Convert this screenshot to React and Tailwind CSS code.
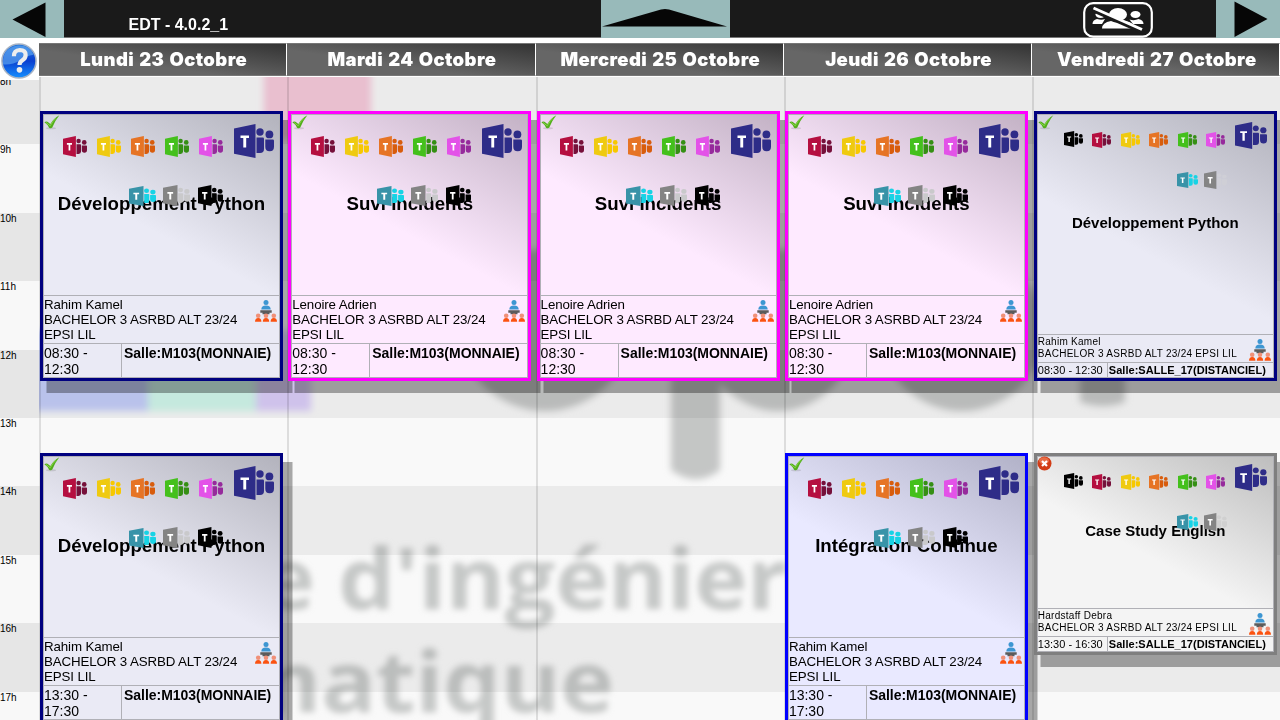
import React from "react";

const NAVY = { border: "border-[#00007f]", top: "#b3b3bd", body: "#eaeaf5" };
const PINK = { border: "border-[#ff00ff]", top: "#c3b2c5", body: "#feeaff" };
const BLUE = { border: "border-[#0000ff]", top: "#b2b2c8", body: "#e9e9ff" };
const GREY = { border: "border-[#7f7f7f]", top: "#bebebe", body: "#f4f4f4" };

const ICON_COLORS = [
  ["#b50f40", "#76103a"],
  ["#efca10", "#f7c800"],
  ["#e67425", "#d85c0c"],
  ["#44c01c", "#358f14"],
  ["#e352e8", "#962a9c"],
];

function TeamsIcon({ a, b, className }) {
  return (
    <svg viewBox="0 0 40 34" preserveAspectRatio="none" className={className}>
      <g fill={b}>
        <circle cx="26" cy="8" r="3.7" />
        <circle cx="35.4" cy="10.4" r="3.9" />
        <path d="M22.5 13.5h6.3q1.2 0 1.2 1.2v10.300q0 4-4 4h-3.500z" />
        <path d="M31.300 15.500h7.500q1.200 0 1.200 1.200v6q0 4.500-4.300 4.500-4.400 0-4.400-4.500z" />
      </g>
      <path d="M0 4.500L21.500 0v34L0 29.700z" fill={a} />
      <path d="M6.500 11.500h8.500v2.500h-2.800v9.500h-2.900v-9.500H6.500z" fill="#fff" />
    </svg>
  );
}

function CheckIcon() {
  return (
    <svg viewBox="0 0 16 15" className="absolute left-[1px] top-[1px] h-[15px] w-[16px]">
      <ellipse cx="7" cy="13.300" rx="5" ry="1" fill="#777" opacity=".25" />
      <path d="M.4 7.300Q2 6 3.500 6.800l2.900 2.200Q9.500 3.500 15.300.3 10.900 5.800 8.300 12.600q-1.500 1.200-3.200.1Q3.600 9.500.4 7.300z" fill="#52ae1b" />
      <path d="M2 7.500l4.200 3.300Q9 5.500 12 3.300" fill="none" stroke="#8dd84e" strokeWidth=".9" />
    </svg>
  );
}

function CrossIcon() {
  return (
    <svg viewBox="0 0 15 15" className="absolute left-0 top-0 h-[15px] w-[15px]">
      <circle cx="7.500" cy="7.500" r="7" fill="#d23c15" />
      <ellipse cx="7" cy="4.700" rx="5" ry="3.500" fill="#f0815c" opacity=".7" />
      <path d="M5 5l5 5M10 5l-5 5" stroke="#fff" strokeWidth="2.200" />
    </svg>
  );
}

function GroupIcon({ className }) {
  return (
    <svg viewBox="0 0 22 22" className={`absolute h-[22px] w-[22px] ${className}`}>
      <circle cx="11" cy="2.600" r="2.500" fill="#3d96d2" />
      <path d="M6.300 9.500q0-4.100 4.700-4.100t4.700 4.100z" fill="#3d96d2" />
      <path d="M5.300 10.300h11.400v2.400h-2.200v1.600h-7v-1.600H5.300z" fill="#5b5b5b" />
      {[3.2, 11, 18.800].map((x) => (
        <g key={x}>
          <circle cx={x} cy="15.700" r="2.300" fill="#f09078" />
          <path d={`M${x - 3.200} 21.700q0-3.800 3.200-3.800t3.200 3.800z`} fill="#fb5210" />
        </g>
      ))}
    </svg>
  );
}

function WideIcons() {
  return (
    <div className="absolute left-[20px] top-[10px]">
      <div className="flex items-center gap-[10px]">
        {ICON_COLORS.map(([a, b]) => (
          <TeamsIcon key={a} a={a} b={b} className="mt-[10px] h-[21px] w-[24px]" />
        ))}
        <TeamsIcon a="#2e2c88" b="#2e2c88" className="ml-[1px] h-[34px] w-[40px]" />
      </div>
      <div className="ml-[66px] mt-[27px] flex items-center">
        <TeamsIcon a="#3893a8" b="#17d3e5" className="h-[20px] w-[27px]" />
        <TeamsIcon a="#848484" b="#c9c9cb" className="ml-[7px] h-[21px] w-[27px]" />
        <TeamsIcon a="#000" b="#000" className="-mt-px ml-[8px] h-[21px] w-[25px]" />
      </div>
    </div>
  );
}

function CompactIcons({ faint }) {
  return (
    <div className="absolute left-[27px] top-[8px]">
      <div className="flex items-center gap-[9.500px]">
        <TeamsIcon a="#000" b="#000" className="mt-[6px] h-[16px] w-[19px]" />
        {ICON_COLORS.map(([a, b]) => (
          <TeamsIcon key={a} a={a} b={b} className="mt-[8px] h-[16px] w-[19px]" />
        ))}
        <TeamsIcon a="#2e2c88" b="#2e2c88" className="h-[27px] w-[32px]" />
      </div>
      <div className="ml-[113px] mt-[22px] flex items-center">
        <TeamsIcon a="#3893a8" b="#17d3e5" className="h-[16px] w-[21px]" />
        <TeamsIcon a="#848484" b={faint} className="ml-[6px] h-[18px] w-[23px]" />
      </div>
    </div>
  );
}

function Course({ tone, title, teacher, start, end, room, compact, cancelled, className }) {
  const line = "border-[#b0b0b6]";
  return (
    <article
      className={`relative flex w-[243px] shrink-0 flex-col border-[3px] text-black shadow-[8px_10.5px_0_1.5px_rgba(0,0,0,0.33)] ${compact ? "-ml-[0.4px]" : "-ml-px"} ${tone.border} ${className}`}
      style={{ backgroundColor: tone.body }}
    >
      <div
        className={`flex min-h-0 flex-1 items-center justify-center border-x border-t pb-[2px] ${line}`}
        style={{ backgroundImage: `linear-gradient(28deg, ${tone.body} 40%, ${tone.top})` }}
      >
        <h2 className={compact ? "text-[15px] font-bold" : "text-[18.670px] font-bold"}>{title}</h2>
      </div>
      {compact ? (
        <>
          <div className={`h-[28px] border-x border-t pt-px text-[10px] leading-[12px] tracking-[0.270px] whitespace-nowrap ${line}`}>
            <p>{teacher}</p>
            <p>BACHELOR 3 ASRBD ALT 23/24 EPSI LIL</p>
          </div>
          <div className={`flex h-[16px] border text-[11px] leading-[15px] whitespace-nowrap ${line}`}>
            <p className={`w-[70px] shrink-0 border-r ${line}`}>{start} - {end}</p>
            <p className="pl-px font-bold tracking-[0.030px]">Salle:{room}</p>
          </div>
        </>
      ) : (
        <>
          <div className={`h-[48px] border-x border-t pt-px text-[13.330px] leading-[15px] tracking-[-0.130px] whitespace-nowrap ${line}`}>
            <p>{teacher}</p>
            <p>BACHELOR 3 ASRBD ALT 23/24</p>
            <p>EPSI LIL</p>
          </div>
          <div className={`flex h-[35px] border text-[14px] leading-[16px] whitespace-nowrap ${line}`}>
            <p className={`w-[78px] shrink-0 border-r pt-px ${line}`}>{start} -<br />{end}</p>
            <p className="pl-[2px] pt-px font-bold tracking-[-0.030px]">Salle:{room}</p>
          </div>
        </>
      )}
      {compact ? <CompactIcons faint={cancelled ? "#d0d0d0" : "#cfcfd6"} /> : <WideIcons />}
      {cancelled ? <CrossIcon /> : <CheckIcon />}
      <GroupIcon className={compact ? "bottom-[17px] right-[3px]" : "bottom-[56px] right-[3px]"} />
    </article>
  );
}

const python = { tone: NAVY, title: "Développement Python", teacher: "Rahim Kamel", room: "M103(MONNAIE)" };
const incidents = { tone: PINK, title: "Suvi Incidents", teacher: "Lenoire Adrien", room: "M103(MONNAIE)" };
const morning = { start: "08:30", end: "12:30", className: "h-[270px]" };
const afternoon = { start: "13:30", end: "17:30", className: "h-[270px]" };

const DAYS = [
  { name: "Lundi 23 Octobre", courses: [{ ...python, ...morning }, { ...python, ...afternoon }] },
  { name: "Mardi 24 Octobre", courses: [{ ...incidents, ...morning }] },
  { name: "Mercredi 25 Octobre", courses: [{ ...incidents, ...morning }] },
  {
    name: "Jeudi 26 Octobre",
    courses: [{ ...incidents, ...morning }, { ...python, tone: BLUE, title: "Intégration Continue", ...afternoon }],
  },
  {
    name: "Vendredi 27 Octobre",
    courses: [
      { ...python, ...morning, room: "SALLE_17(DISTANCIEL)", compact: true },
      {
        tone: GREY, title: "Case Study English", teacher: "Hardstaff Debra", room: "SALLE_17(DISTANCIEL)",
        start: "13:30", end: "16:30", className: "h-[202px]", compact: true, cancelled: true,
      },
    ],
  },
];

const HOURS = ["8h", "9h", "10h", "11h", "12h", "13h", "14h", "15h", "16h", "17h"];

function Watermark() {
  return (
    <svg viewBox="0 76 1280 644" className="absolute inset-0 h-[644px] w-[1280px] mix-blend-multiply">
      <defs>
        <filter id="soft" x="-10%" y="-10%" width="120%" height="120%">
          <feGaussianBlur stdDeviation="3.500" />
        </filter>
        <filter id="softText" x="-10%" y="-10%" width="120%" height="120%">
          <feGaussianBlur stdDeviation="3.400" />
        </filter>
      </defs>
      <g filter="url(#soft)">
        <path d="M264 60h107v80H264z" fill="#fdcfe1" />
        <path d="M30 330h118v81H30z" fill="#c9d3ff" />
        <path d="M148 330h108v81H148z" fill="#d6fdf1" />
        <path d="M256 330h55v81h-55z" fill="#e1d3ff" />
        <g fill="#c9cbca">
          <ellipse cx="545" cy="330" rx="85" ry="81" />
          <path d="M671 300h49v170q-24 18-49 0z" />
          <ellipse cx="778" cy="330" rx="77" ry="81" />
          <ellipse cx="962" cy="330" rx="82" ry="81" />
          <path d="M1080 300h45v102q-22 8-45 0z" />
        </g>
      </g>
      <g filter="url(#softText)" fill="#cbcdcc" fontFamily="'Open Sans', sans-serif" fontWeight="700" fontSize="84">
        <text x="262" y="609" textLength="526" lengthAdjust="spacingAndGlyphs">e d'ingénier</text>
        <text x="232" y="712" textLength="382" lengthAdjust="spacingAndGlyphs">matique</text>
      </g>
    </svg>
  );
}

function Header() {
  return (
    <header className="flex h-[38px] border-b border-[#777] bg-[#1a1a1a]">
      <button className="flex h-[38px] w-[64px] bg-[#98baba]">
        <svg viewBox="0 0 64 38" className="h-[38px] w-[64px]"><path d="M12.500 19.500L45.500 2.500v34.500z" fill="#060606" /></svg>
      </button>
      <h1 className="w-[537px] pl-[64.500px] pt-[13px] text-[16px] leading-[24px] font-bold text-white">EDT - 4.0.2_1</h1>
      <button className="h-[38px] w-[129px] bg-[#98baba]">
        <svg viewBox="0 0 129 38" className="h-[38px] w-[129px]"><path d="M1 26.500L60 9.500q4-1 8 0l58 17z" fill="#060606" /></svg>
      </button>
      <div className="w-[353px]" />
      <svg viewBox="0 0 70 36" className="mt-[1.500px] h-[36px] w-[70px]">
        <rect x="1.200" y="1.200" width="67.600" height="33.500" rx="9" fill="none" stroke="#fff" strokeWidth="2.200" />
        <g fill="#fff">
          <ellipse cx="35" cy="12.500" rx="9" ry="6.500" />
          <path d="M19 26.500q0-6 9-7.500 7 3 14 0 9.500 1.500 9.500 7.500z" />
          <ellipse cx="17.500" cy="12.500" rx="5" ry="3.500" />
          <ellipse cx="52.500" cy="12.500" rx="5" ry="3.500" />
          <path d="M9.500 22q0-4 4.500-5 4.500 1.500 8 0l-3 5z" />
          <path d="M46.500 17.500q5 1.500 9-.5 5 1 5 5H50z" />
        </g>
        <path d="M10 8l49 21.500" stroke="#1a1a1a" strokeWidth="4.500" />
        <path d="M10.500 6l48.500 21.500" stroke="#fff" strokeWidth="3" />
      </svg>
      <div className="flex-1" />
      <button className="h-[38px] w-[64px] bg-[#98baba]">
        <svg viewBox="0 0 64 38" className="h-[38px] w-[64px]"><path d="M18.500 1.500L51.500 19 18.500 37z" fill="#060606" /></svg>
      </button>
    </header>
  );
}

function HelpBadge() {
  return (
    <svg viewBox="0 0 38 38" className="h-[37px] w-[38px]">
      <defs>
        <linearGradient id="ball" x1="0" y1="0" x2="0" y2="1">
          <stop offset="0" stopColor="#2378dc" />
          <stop offset=".5" stopColor="#0a3fd0" />
          <stop offset="1" stopColor="#1690ff" />
        </linearGradient>
      </defs>
      <circle cx="19" cy="18.500" r="17.500" fill="url(#ball)" stroke="#a8b4c4" strokeWidth="1.600" />
      <path d="M2.500 20Q2 5 18 2.500 30 2 34 12 26 13 20 18 12 23 2.500 22z" fill="#5ba4f0" opacity=".7" />
      <path d="M13.800 13.500q0-6 6-6.300 6 0 6 5 0 3.500-3.600 5.800-2.700 1.700-2.700 4.700" fill="none" stroke="#ededed" strokeWidth="4.300" />
      <circle cx="19.500" cy="27.600" r="2.900" fill="#ededed" />
    </svg>
  );
}

export default function App() {
  return (
    <div className="flex h-[720px] w-[1280px] flex-col overflow-hidden bg-white font-['Liberation_Sans',Arial,sans-serif]">
      <Header />
      <div className="relative z-10 flex h-[38px] shrink-0 pt-[5px]">
        <div className="h-[37px] w-[39px] shrink-0 bg-white"><HelpBadge /></div>
        {DAYS.map((day) => (
          <div
            key={day.name}
            className="flex h-[33px] w-[248.300px] shrink-0 items-center justify-center border-y border-r border-y-[#777] border-r-white bg-[linear-gradient(188deg,#333,#666_62%)] pl-[2px] font-['Inter',sans-serif] text-[18.500px] font-black tracking-[0.4px] text-white shadow-[0_1px_0_#fff] [word-spacing:1px]"
          >
            {day.name}
          </div>
        ))}
      </div>
      <main className="relative flex h-[644px] overflow-hidden">
        <div className="absolute inset-0">
          {HOURS.map((hour, i) => (
            <div key={hour} className={i % 2 ? "h-[68.400px] bg-[#f9f9f9]" : "h-[68.400px] bg-[#ebebeb]"} />
          ))}
        </div>
        <Watermark />
        <div className="relative w-[39px] shrink-0 text-[10px]">
          {HOURS.map((hour, i) => (
            <div key={hour} className={i % 2 ? "h-[68.400px] bg-[#f8f8f8]" : "h-[68.400px] bg-[#e6e6e6]"}>
              <p className="leading-[12px]">{hour}</p>
            </div>
          ))}
        </div>
        {DAYS.map((day) => (
          <section key={day.name} className="relative flex w-[248.300px] shrink-0 flex-col gap-[72px] border-l-2 border-[#0000001c] pt-[35px]">
            {day.courses.map((course) => (
              <Course key={course.start} {...course} />
            ))}
          </section>
        ))}
      </main>
    </div>
  );
}
